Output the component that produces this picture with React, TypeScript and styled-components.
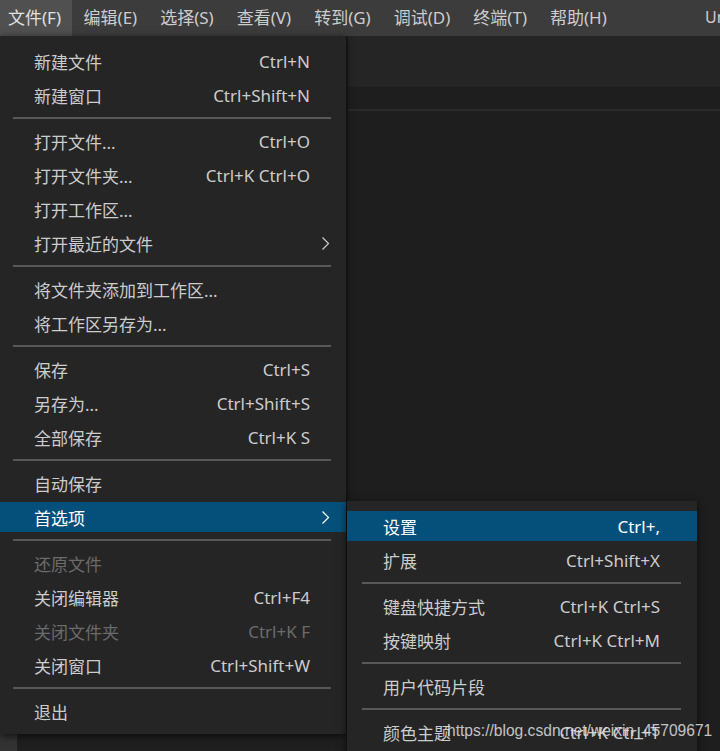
import React from 'react';
import styled, { createGlobalStyle } from 'styled-components';

const GlobalStyle = createGlobalStyle`
  html, body {
    margin: 0;
    padding: 0;
    background: #1e1e1e;
  }
  * {
    box-sizing: border-box;
  }
`;

const UI_FONT = `"Noto Sans", "Noto Sans CJK SC", sans-serif`;

const Window = styled.div`
  position: relative;
  width: 720px;
  height: 751px;
  overflow: hidden;
  display: flex;
  flex-direction: column;
  background: #1e1e1e;
  font-family: ${UI_FONT};
  color: #cccccc;
`;

const TitleBar = styled.div`
  height: 36px;
  flex-shrink: 0;
  display: flex;
  align-items: stretch;
  background: #3c3c3c;
  overflow: hidden;
  white-space: nowrap;
`;

const MenuBarItem = styled.div<{ $active?: boolean }>`
  display: flex;
  align-items: center;
  padding: 0 11.5px 3px;
  font-size: 17px;
  color: ${(p) => (p.$active ? '#e0e0e0' : '#cccccc')};
  background: ${(p) => (p.$active ? '#505050' : 'transparent')};

  &:first-child {
    padding: 0 11px 3px 8px;
  }
`;

const TitleSpacer = styled.div`
  flex: 1;
`;

const TitleText = styled.div`
  display: flex;
  align-items: center;
  flex: 0 0 15px;
  padding-bottom: 3px;
  overflow: hidden;
  font-size: 16px;
  color: #cccccc;
`;

const Workbench = styled.div`
  flex: 1;
  display: flex;
`;

const ActivityBar = styled.div`
  width: 17px;
  background: #333333;
`;

const SideBar = styled.div`
  width: 329px;
  background: #1f1f1f;
`;

const Editor = styled.div`
  flex: 1;
  display: flex;
  flex-direction: column;
  background: #1e1e1e;
  border-left: 2px solid #1a1a1a;
`;

const TabStrip = styled.div`
  height: 51px;
  background: #252526;
`;

const Breadcrumbs = styled.div`
  height: 24px;
  background: #1e1e1e;
  border-bottom: 2px solid #2a2a2a;
`;

const EditorBody = styled.div`
  flex: 1;
  background: #1e1e1e;
`;

const MenuPanel = styled.div<{ $left: number; $top: number; $width: number }>`
  position: absolute;
  left: ${(p) => p.$left}px;
  top: ${(p) => p.$top}px;
  width: ${(p) => p.$width}px;
  display: flex;
  flex-direction: column;
  padding: 8px 0 6px;
  background: #252526;
  box-shadow: 0 2px 8px rgba(0, 0, 0, 0.65);
  font-family: ${UI_FONT};
  font-size: 17px;
  z-index: 2;
`;

const Row = styled.div<{ $selected?: boolean; $disabled?: boolean; $indent: number; $endPad: number }>`
  height: 30px;
  margin: 2px 0;
  flex-shrink: 0;
  display: grid;
  grid-template-columns: 1fr auto 20px;
  align-items: center;
  padding: 0 ${(p) => p.$endPad}px 0 ${(p) => p.$indent}px;
  white-space: nowrap;
  background: ${(p) => (p.$selected ? '#04507a' : 'transparent')};
  color: ${(p) => (p.$disabled ? '#6b6b6b' : p.$selected ? '#ffffff' : '#cccccc')};
`;

const Shortcut = styled.span`
  text-align: right;
`;

const ArrowCell = styled.span`
  display: flex;
  justify-content: flex-end;
  align-items: center;
`;

const Separator = styled.div<{ $left: number; $right: number }>`
  height: 2px;
  flex-shrink: 0;
  margin: 5px ${(p) => p.$right}px 5px ${(p) => p.$left}px;
  background: #585858;
`;

const Watermark = styled.div`
  position: absolute;
  left: 447px;
  top: 722px;
  font-family: "Liberation Sans", Arial, sans-serif;
  font-size: 15.6px;
  color: rgba(225, 225, 225, 0.85);
  white-space: nowrap;
  z-index: 3;
`;

type Entry =
  | { sep: true }
  | { label: string; key?: string; sub?: boolean; selected?: boolean; disabled?: boolean };

const fileMenu: Entry[] = [
  { label: '新建文件', key: 'Ctrl+N' },
  { label: '新建窗口', key: 'Ctrl+Shift+N' },
  { sep: true },
  { label: '打开文件...', key: 'Ctrl+O' },
  { label: '打开文件夹...', key: 'Ctrl+K Ctrl+O' },
  { label: '打开工作区...' },
  { label: '打开最近的文件', sub: true },
  { sep: true },
  { label: '将文件夹添加到工作区...' },
  { label: '将工作区另存为...' },
  { sep: true },
  { label: '保存', key: 'Ctrl+S' },
  { label: '另存为...', key: 'Ctrl+Shift+S' },
  { label: '全部保存', key: 'Ctrl+K S' },
  { sep: true },
  { label: '自动保存' },
  { label: '首选项', sub: true, selected: true },
  { sep: true },
  { label: '还原文件', disabled: true },
  { label: '关闭编辑器', key: 'Ctrl+F4' },
  { label: '关闭文件夹', key: 'Ctrl+K F', disabled: true },
  { label: '关闭窗口', key: 'Ctrl+Shift+W' },
  { sep: true },
  { label: '退出' },
];

const prefsMenu: Entry[] = [
  { label: '设置', key: 'Ctrl+,', selected: true },
  { label: '扩展', key: 'Ctrl+Shift+X' },
  { sep: true },
  { label: '键盘快捷方式', key: 'Ctrl+K Ctrl+S' },
  { label: '按键映射', key: 'Ctrl+K Ctrl+M' },
  { sep: true },
  { label: '用户代码片段' },
  { sep: true },
  { label: '颜色主题', key: 'Ctrl+K Ctrl+T' },
  { label: '文件图标主题' },
];

const menuBar = ['文件(F)', '编辑(E)', '选择(S)', '查看(V)', '转到(G)', '调试(D)', '终端(T)', '帮助(H)'];

const Chevron: React.FC = () => (
  <svg width="9" height="15" viewBox="0 0 9 15">
    <path d="M1.5 1.5 L7.5 7.5 L1.5 13.5" fill="none" stroke="currentColor" strokeWidth="1.2" />
  </svg>
);

interface MenuProps {
  readonly entries: Entry[];
  readonly left: number;
  readonly top: number;
  readonly width: number;
  readonly indent: number;
  readonly endPad: number;
  readonly sepLeft: number;
  readonly sepRight: number;
}

const Menu: React.FC<MenuProps> = ({ entries, left, top, width, indent, endPad, sepLeft, sepRight }) => (
  <MenuPanel $left={left} $top={top} $width={width}>
    {entries.map((e, i) =>
      'sep' in e ? (
        <Separator key={i} $left={sepLeft} $right={sepRight} />
      ) : (
        <Row
          key={i}
          $selected={e.selected}
          $disabled={e.disabled}
          $indent={indent}
          $endPad={endPad}
        >
          <span>{e.label}</span>
          <Shortcut>{e.key}</Shortcut>
          <ArrowCell>{e.sub && <Chevron />}</ArrowCell>
        </Row>
      ),
    )}
  </MenuPanel>
);

const App: React.FC = () => (
  <>
    <GlobalStyle />
    <Window>
      <TitleBar>
        {menuBar.map((m, i) => (
          <MenuBarItem key={m} $active={i === 0}>
            {m}
          </MenuBarItem>
        ))}
        <TitleSpacer />
        <TitleText>Untitled-1</TitleText>
      </TitleBar>
      <Workbench>
        <ActivityBar />
        <SideBar />
        <Editor>
          <TabStrip />
          <Breadcrumbs />
          <EditorBody />
        </Editor>
      </Workbench>
      <Menu
        entries={fileMenu}
        left={0}
        top={36}
        width={346}
        indent={34}
        endPad={16}
        sepLeft={13}
        sepRight={15}
      />
      <Menu
        entries={prefsMenu}
        left={347}
        top={501}
        width={350}
        indent={36}
        endPad={17}
        sepLeft={15}
        sepRight={16}
      />
      <Watermark>https://blog.csdn.net/weixin_45709671</Watermark>
    </Window>
  </>
);

export default App;
